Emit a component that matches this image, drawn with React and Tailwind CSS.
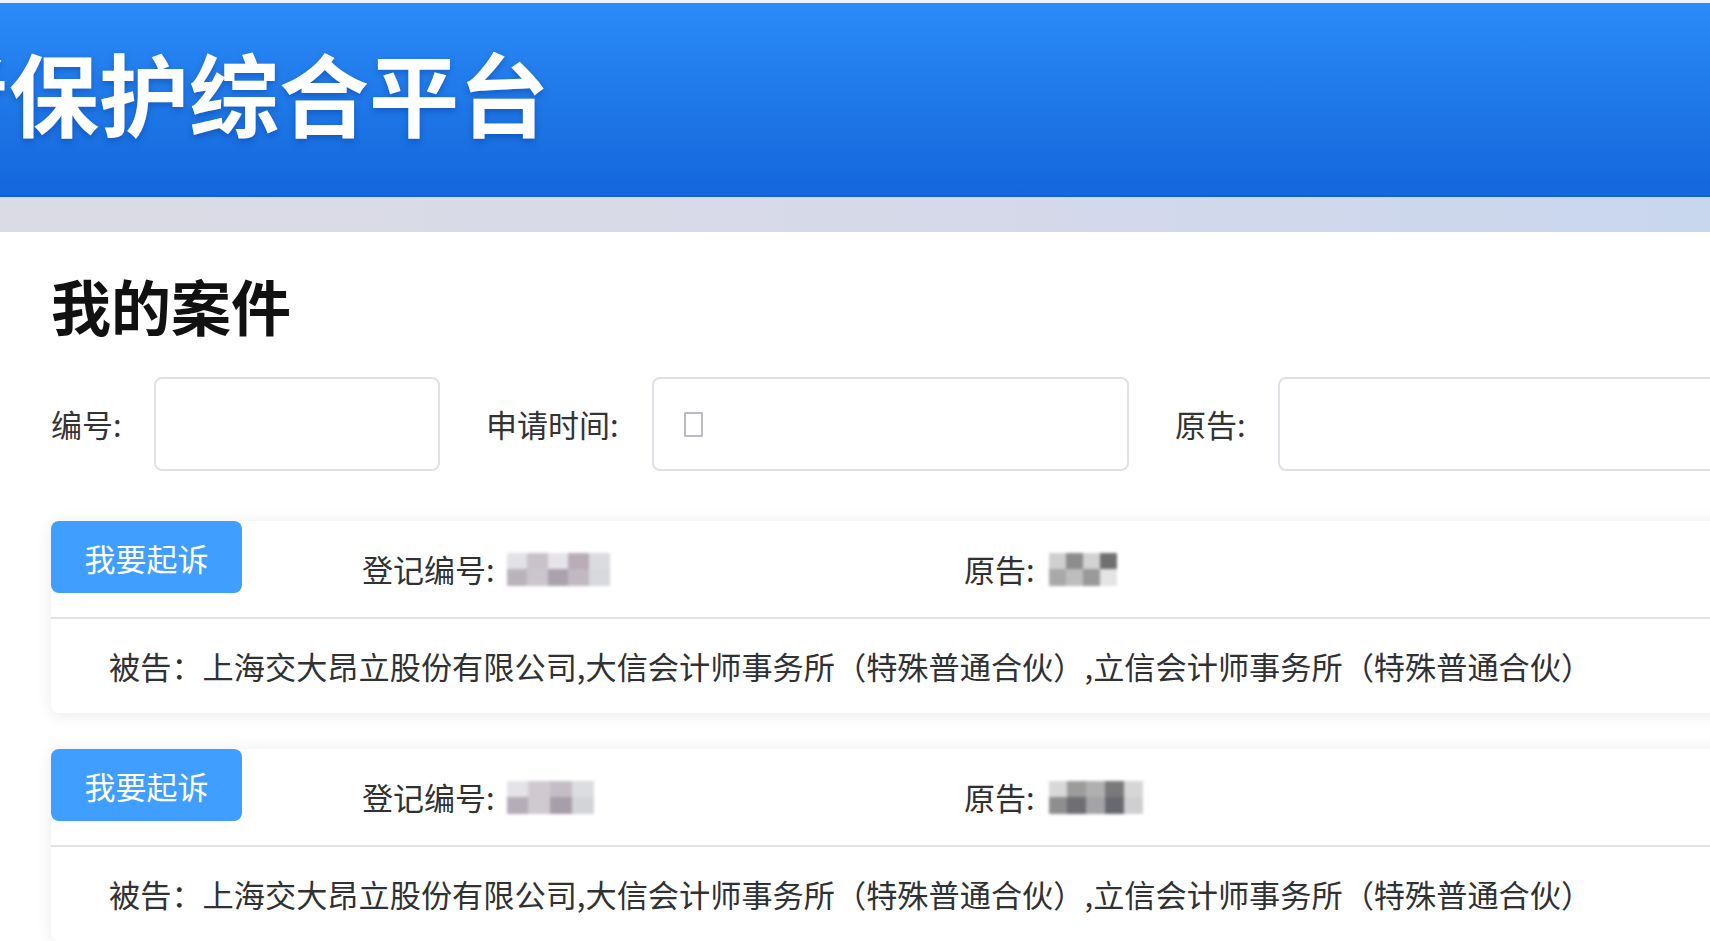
import React from "react"

const Mosaic = ({ cols, cells, w, h }) => (
  <div
    className="grid blur-[1.5px]"
    style={{ gridTemplateColumns: `repeat(${cols}, 1fr)`, width: w, height: h }}
  >
    {cells.map((c, i) => (
      <div key={i} style={{ background: c }} />
    ))}
  </div>
)

const cases = [
  {
    reg: { w: 103, cols: 5, cells: ["#e2e1e5", "#c9c2c9", "#e6e4e8", "#b8acb6", "#dadbdf", "#bab3bc", "#cbc6cd", "#aba2ad", "#c0b9c2", "#d7d8dc"] },
    plaintiff: { w: 68, cols: 4, cells: ["#cfcfcf", "#8c8c8c", "#d2d2d2", "#707070", "#a9a9a9", "#bdbdbd", "#999999", "#e4e4e4"] },
  },
  {
    reg: { w: 87, cols: 4, cells: ["#e4e3e7", "#d0cad0", "#c4bdc5", "#dcdde1", "#b5adb7", "#cfcad0", "#a69fa9", "#d3d4d8"] },
    plaintiff: { w: 94, cols: 5, cells: ["#d8d8d8", "#9c9c9c", "#b0b0b0", "#7a7a7a", "#d6d6d6", "#8e8e8e", "#6e6e73", "#a4a4a8", "#686870", "#cfcfd2"] },
  },
]

const defendant = "被告：上海交大昂立股份有限公司,大信会计师事务所（特殊普通合伙）,立信会计师事务所（特殊普通合伙）"

function CaseCard({ item }) {
  return (
    <div className="w-[1700px] h-[192px] bg-white rounded-[8px] shadow-[0_2px_16px_rgba(0,0,0,0.09)] flex flex-col shrink-0">
      <div className="h-[96px] flex items-center">
        <button className="self-start shrink-0 w-[191px] h-[72px] rounded-[8px] bg-[#409eff] text-white text-[31px] leading-none">
          我要起诉
        </button>
        <div className="ml-[120px] w-[602px] shrink-0 flex items-center text-[31px] text-[#303133]">
          <span>登记编号:</span>
          <div className="ml-[12px]">
            <Mosaic cols={item.reg.cols} cells={item.reg.cells} w={item.reg.w} h={33} />
          </div>
        </div>
        <div className="flex items-center text-[31px] text-[#303133]">
          <span>原告:</span>
          <div className="ml-[14px]">
            <Mosaic cols={item.plaintiff.cols} cells={item.plaintiff.cells} w={item.plaintiff.w} h={33} />
          </div>
        </div>
      </div>
      <div className="border-t-2 border-[#e2e2e4]" />
      <div className="flex-1 flex items-center pl-[58px] text-[31.2px] text-[#303133] whitespace-nowrap">
        {defendant}
      </div>
    </div>
  )
}

export default function App() {
  return (
    <div className="w-[1710px] h-[941px] overflow-hidden bg-white font-['Noto_Sans_CJK_SC','Noto_Sans',sans-serif]">
      <header className="h-[197px] border-t-[3px] border-t-[#eef4fd] border-b-2 border-b-[#0e61d8] bg-[linear-gradient(180deg,#2b8bf9,#1e77e6_55%,#1467dc)] flex items-center overflow-hidden">
        <h1 className="ml-[-81px] pb-[16px] text-[90px] leading-none font-bold text-white whitespace-nowrap [text-shadow:0_3px_6px_rgba(0,40,130,0.35)]">
          者保护综合平台
        </h1>
      </header>
      <div className="h-[35px] bg-[linear-gradient(90deg,#dbdbe5,#d6d9e9_55%,#c8d6ee)]" />

      <main className="pl-[51px]">
        <h2 className="mt-[43px] text-[60px] leading-[60px] font-bold text-[#111]">我的案件</h2>

        <div className="mt-[42px] h-[94px] flex items-center text-[31px] text-[#333] whitespace-nowrap">
          <label className="w-[103px] shrink-0">编号:</label>
          <div className="w-[286px] h-[94px] shrink-0 border-2 border-[#dfe1e6] rounded-[8px]" />
          <label className="ml-[46px] w-[166px] shrink-0">申请时间:</label>
          <div className="w-[477px] h-[94px] shrink-0 border-2 border-[#dfe1e6] rounded-[8px] flex items-center pl-[30px]">
            <span className="w-[19px] h-[25px] border-2 border-[#b9bcc6] rounded-[1px]" />
          </div>
          <label className="ml-[46px] w-[103px] shrink-0">原告:</label>
          <div className="w-[477px] h-[94px] border-2 border-[#dfe1e6] rounded-[8px] shrink-0" />
        </div>

        <div className="mt-[50px] flex flex-col gap-[36px]">
          {cases.map((item, i) => (
            <CaseCard key={i} item={item} />
          ))}
        </div>
      </main>
    </div>
  )
}
